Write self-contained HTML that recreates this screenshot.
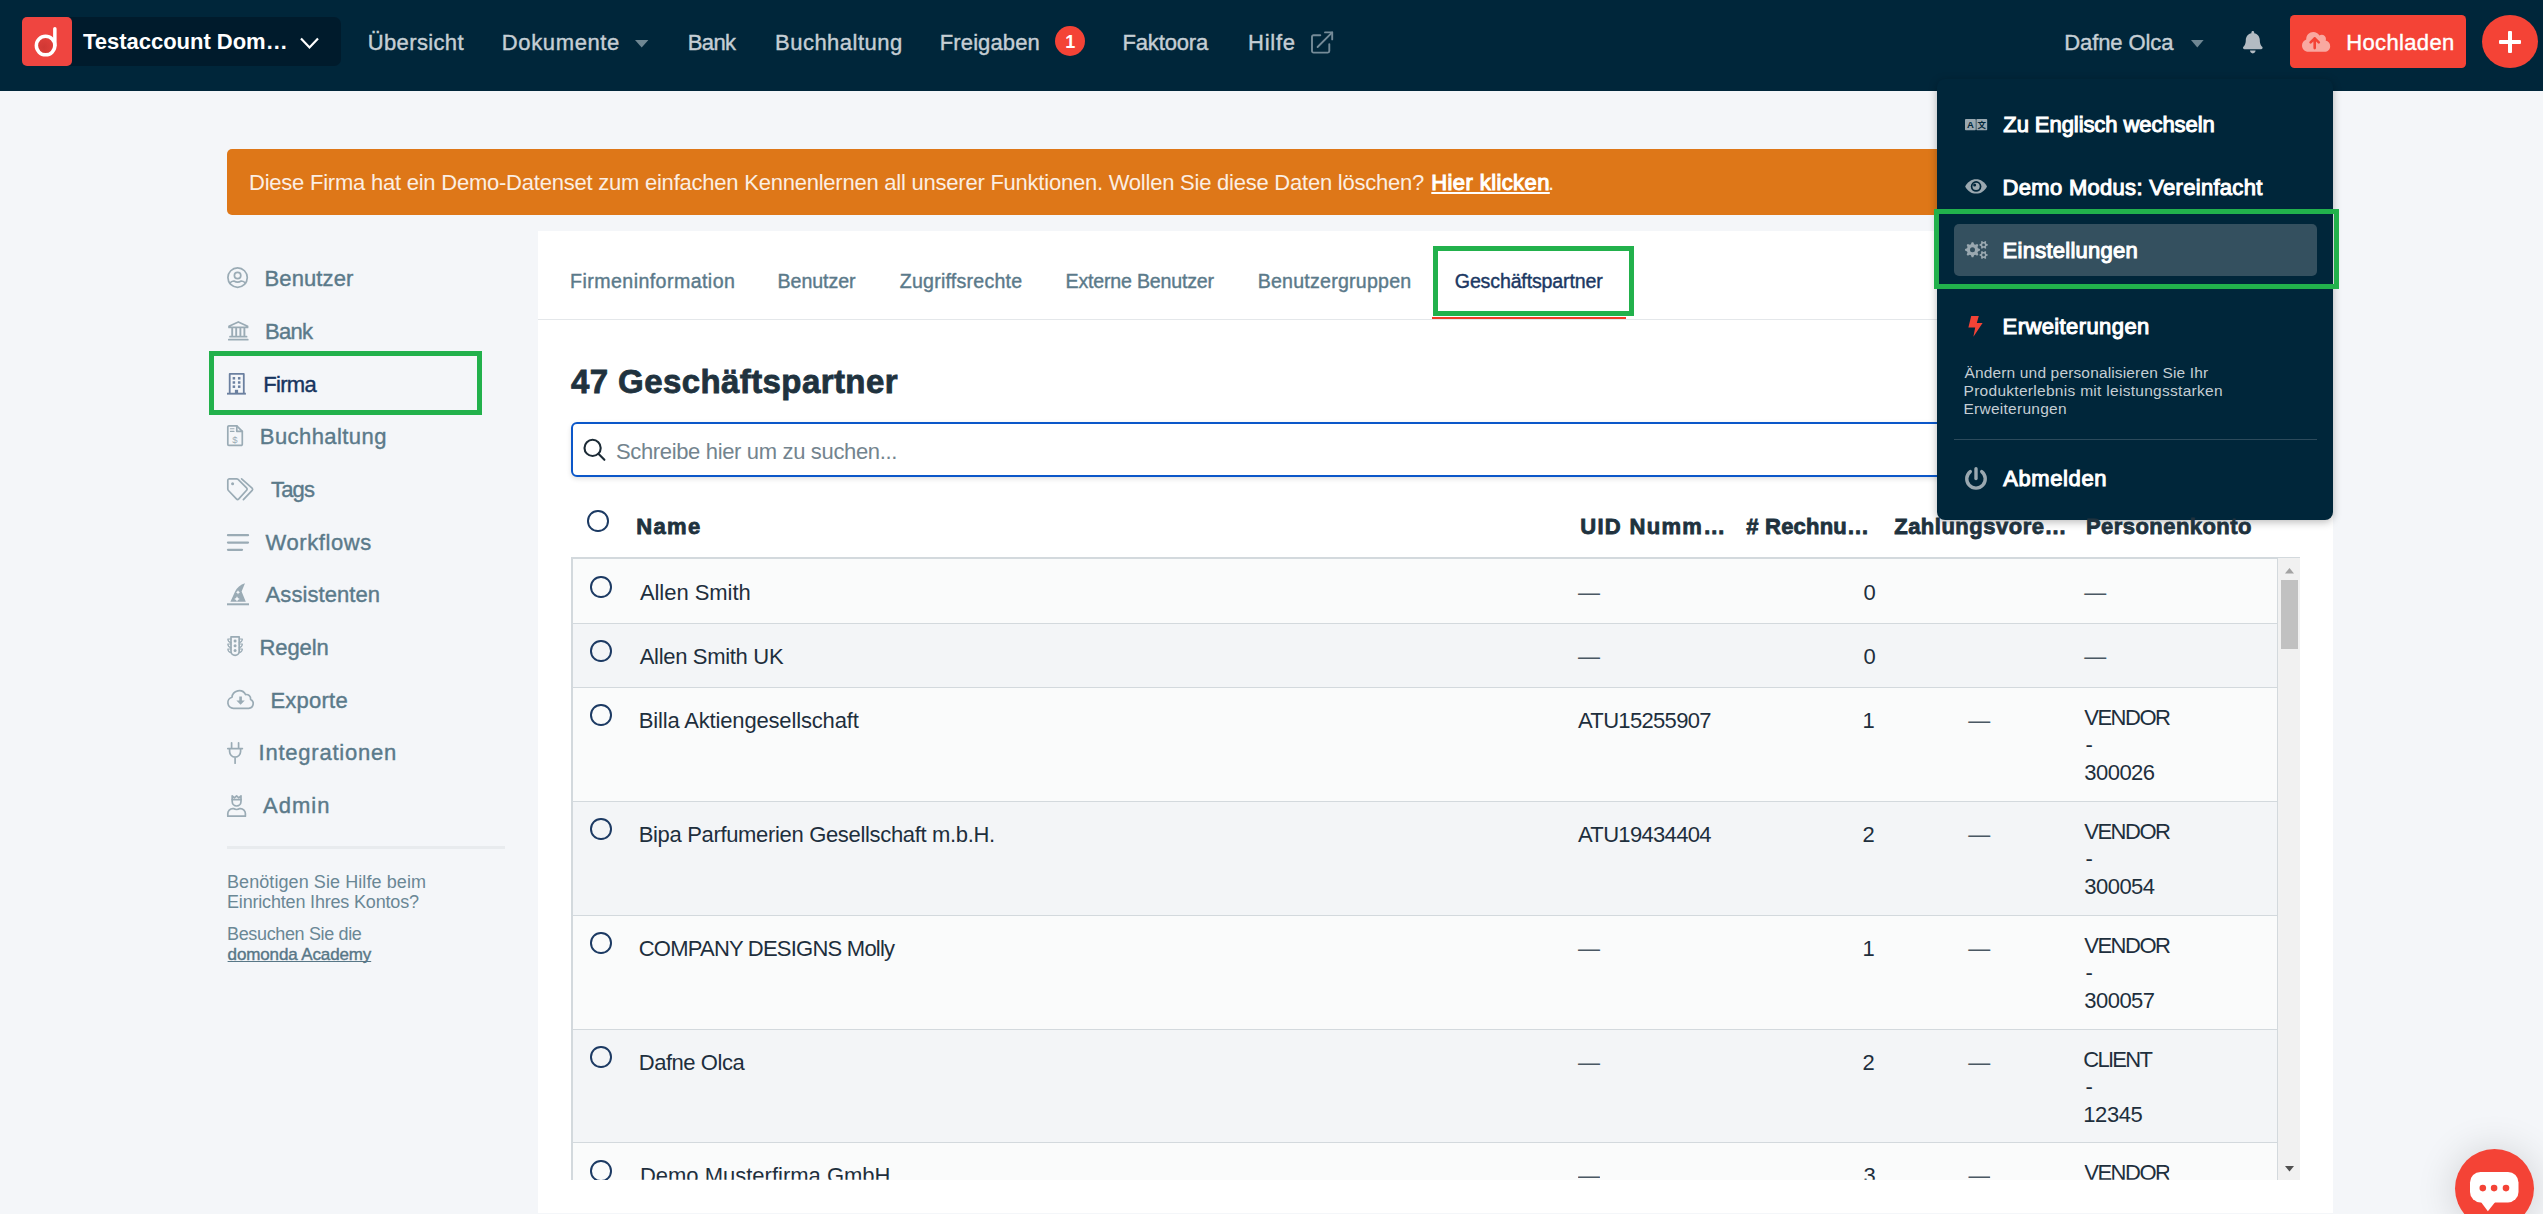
<!DOCTYPE html>
<html lang="de">
<head>
<meta charset="utf-8">
<title>domonda – Geschäftspartner</title>
<style>
html,body{margin:0;padding:0;}
body{width:2543px;height:1214px;overflow:hidden;position:relative;background:#f4f6f9;font-family:"Liberation Sans",sans-serif;}
.a{position:absolute;}
.t{position:absolute;white-space:nowrap;line-height:1;font-weight:400;}
.t.b{font-weight:700;}
.t.s{-webkit-text-stroke:0.4px currentColor;}
.t.m{-webkit-text-stroke:1.05px currentColor;}
.t.k{font-weight:700;-webkit-text-stroke:0.8px currentColor;}
svg{position:absolute;overflow:visible;}
.row{position:absolute;left:573px;width:1705px;border-bottom:1.5px solid #d3d9dd;box-sizing:border-box;}
.ro{background:#fafbfb;}
.re{background:#f3f5f7;}
.rad{position:absolute;width:21.5px;height:21.5px;border:2.1px solid #1c3a63;border-radius:50%;box-sizing:border-box;}
.green{position:absolute;border:5px solid #22b14c;box-sizing:border-box;}
</style>
</head>
<body>
<!-- NAVBAR -->
<div class="a" style="left:0;top:0;width:2543px;height:90.6px;background:#00263a;"></div>
<div class="a" style="left:22px;top:17px;width:319px;height:49px;background:#001b2c;border-radius:7px;"></div>
<div class="a" style="left:22px;top:17px;width:50px;height:49px;background:#ef4540;border-radius:5px;"></div>
<svg style="left:22px;top:17px" width="50" height="49" viewBox="0 0 50 49">
 <defs><radialGradient id="lg" cx="0.4" cy="0.6" r="0.75"><stop offset="0" stop-color="#d03834"/><stop offset="1" stop-color="#e5413c"/></radialGradient></defs>
 <circle cx="23.6" cy="28.6" r="9.25" fill="url(#lg)" stroke="#fff" stroke-width="3.5"/>
 <path d="M32.85 28.6 V11.7" stroke="#fff" stroke-width="3.5" stroke-linecap="round" fill="none"/>
</svg>
<svg style="left:300px;top:37px" width="20" height="13" viewBox="0 0 20 13"><path d="M1 1.5 L9.5 10.5 L18 1.5" fill="none" stroke="#fff" stroke-width="2.2"/></svg>
<!-- carets -->
<svg style="left:635.4px;top:39.5px" width="13.4" height="7.5" viewBox="0 0 13.4 7.5"><path d="M0 0H13.4L6.7 7.5Z" fill="#6f8793"/></svg>
<svg style="left:2191.3px;top:39.5px" width="12.6" height="7.5" viewBox="0 0 12.6 7.5"><path d="M0 0H12.6L6.3 7.5Z" fill="#6f8793"/></svg>
<!-- badge -->
<div class="a" style="left:1054.7px;top:26.2px;width:30px;height:30px;border-radius:50%;background:#f44336;"></div>
<!-- external link icon -->
<svg style="left:1311px;top:30.5px" width="23" height="23" viewBox="0 0 23 23" fill="none" stroke="#758b98" stroke-width="1.9" stroke-linecap="round" stroke-linejoin="round">
 <path d="M18.3 13.1 V20.1 a1.5 1.5 0 0 1 -1.5 1.5 H2.5 a1.5 1.5 0 0 1 -1.5 -1.5 V5.7 a1.5 1.5 0 0 1 1.5 -1.5 H9.3"/>
 <path d="M14 1.4 H21.2 V8.4"/><path d="M21.2 1.4 L6.6 16"/>
</svg>
<!-- bell -->
<svg style="left:2242.7px;top:30.7px" width="19.6" height="22.4" viewBox="0 0 448 512"><path fill="#b3bbc2" d="M224 512c35.32 0 63.97-28.65 63.97-64H160.03c0 35.35 28.65 64 63.97 64zm215.39-149.71c-19.32-20.76-55.47-51.99-55.47-154.29 0-77.7-54.48-139.9-127.94-155.16V32c0-17.67-14.32-32-31.98-32s-31.98 14.33-31.98 32v20.84C118.56 68.1 64.08 130.3 64.08 208c0 102.3-36.15 133.53-55.47 154.29-6 6.45-8.66 14.16-8.61 21.71.11 16.4 12.98 32 32.1 32h383.8c19.12 0 32-15.6 32.1-32 .05-7.55-2.61-15.27-8.61-21.71z"/></svg>
<!-- upload button -->
<div class="a" style="left:2290px;top:14.8px;width:175.8px;height:53.1px;border-radius:4.5px;background:#f44336;"></div>
<svg style="left:2301.8px;top:32.2px" width="28.2" height="19.8" viewBox="0 0 640 448"><path fill="#f9a8a0" d="M537.6 194.600c4.100-10.700 6.400-22.400 6.400-34.600 0-53-43-96-96-96-19.700 0-38.100 6-53.300 16.200C367 32.200 315.300 0 256 0 167.600 0 96 71.600 96 160c0 2.700.1 5.400.2 8.100C40.200 187.800 0 241.200 0 304c0 79.500 64.500 144 144 144h368c70.700 0 128-57.300 128-128 0-61.900-44-113.600-102.400-125.400z"/></svg>
<svg style="left:2301.8px;top:32.2px" width="28.2" height="19.8" viewBox="0 0 28.2 19.8" fill="none" stroke="#f44336" stroke-width="2.6" stroke-linecap="round" stroke-linejoin="round"><path d="M12.7 16.1V6.4M8.6 10.4L12.7 6.3L16.8 10.4"/></svg>
<!-- plus circle -->
<div class="a" style="left:2482px;top:14.8px;width:56px;height:53px;border-radius:50%;background:#f44336;"></div>
<div class="a" style="left:2499.3px;top:39.9px;width:21.7px;height:4.4px;background:#fff;border-radius:1px;"></div>
<div class="a" style="left:2507.9px;top:31.2px;width:4.4px;height:21.9px;background:#fff;border-radius:1px;"></div>

<!-- BANNER -->
<div class="a" style="left:227px;top:149px;width:2106px;height:65.8px;border-radius:5px;background:#de7718;"></div>

<!-- PANEL -->
<div class="a" style="left:538px;top:231px;width:1795px;height:982px;background:#fff;"></div>
<div class="a" style="left:538px;top:319px;width:1795px;height:1px;background:#e4e7ea;"></div>
<div class="a" style="left:1432px;top:317px;width:194px;height:2px;background:#f23b26;"></div>

<!-- SEARCH -->
<div class="a" style="left:570.6px;top:421.5px;width:1729.4px;height:55.8px;box-sizing:border-box;border:2.7px solid #0b57c9;border-radius:6px;background:#fff;box-shadow:0 2px 5px rgba(0,0,0,0.12);"></div>
<svg style="left:582.6px;top:439.1px" width="23" height="22" viewBox="0 0 23 22" fill="none" stroke="#1c2b36" stroke-width="2.1"><circle cx="9.6" cy="8.9" r="8.1"/><path d="M15.4 14.7 L21.4 20.8" stroke-linecap="round"/></svg>

<!-- TABLE -->
<div class="a" style="left:571px;top:556.6px;width:1729px;height:2.6px;background:#d3d9dd;"></div>
<div class="a" style="left:571px;top:558px;width:1729px;height:622px;overflow:hidden;">
  <div class="a" style="left:0;top:0;width:2px;height:622px;background:#d3d9dd;"></div>
  <div class="a" style="left:1706.3px;top:0;width:1.7px;height:622px;background:#d3d9dd;"></div>
  <div class="a" style="left:1707px;top:0;width:22px;height:622px;background:#f1f1f1;"></div>
  <div class="a" style="left:1710px;top:22px;width:17px;height:69px;background:#c1c1c1;"></div>
  <svg style="left:1714px;top:9.5px" width="9" height="5.5" viewBox="0 0 9 5.5"><path d="M0 5.5H9L4.5 0Z" fill="#a3a3a3"/></svg>
  <svg style="left:1714px;top:607.5px" width="9" height="5.5" viewBox="0 0 9 5.5"><path d="M0 0H9L4.5 5.5Z" fill="#505050"/></svg>
  <div class="row ro" style="left:2px;width:1704px;top:1px;height:64.5px;"></div>
  <div class="row re" style="left:2px;width:1704px;top:65.5px;height:64px;"></div>
  <div class="row ro" style="left:2px;width:1704px;top:129.5px;height:114px;"></div>
  <div class="row re" style="left:2px;width:1704px;top:243.5px;height:114px;"></div>
  <div class="row ro" style="left:2px;width:1704px;top:357.5px;height:114px;"></div>
  <div class="row re" style="left:2px;width:1704px;top:471.5px;height:113.5px;"></div>
  <div class="row ro" style="left:2px;width:1704px;top:585px;height:114px;"></div>
  <div class="rad" style="left:19.3px;top:602.3px;"></div>
</div>
<!-- radios -->
<div class="rad" style="left:587.2px;top:510.2px;"></div>
<div class="rad" style="left:590.3px;top:576.2px;"></div>
<div class="rad" style="left:590.3px;top:640.1px;"></div>
<div class="rad" style="left:590.3px;top:704.2px;"></div>
<div class="rad" style="left:590.3px;top:818.2px;"></div>
<div class="rad" style="left:590.3px;top:932.2px;"></div>
<div class="rad" style="left:590.3px;top:1046.3px;"></div>


<!-- SIDEBAR -->
<div class="a" style="left:227px;top:845.5px;width:278px;height:3.2px;background:#e8ebee;"></div>
<svg style="left:226.8px;top:267.3px" width="21.2" height="21.2" viewBox="0 0 21.2 21.2" fill="none" stroke="#9aabb5" stroke-width="1.7" stroke-linecap="round" stroke-linejoin="round"><circle cx="10.6" cy="10.6" r="9.7"/><circle cx="10.6" cy="8.5" r="3.2"/><path d="M2.7 16.3C3.9 14.7 5.6 13.9 7 14C8.2 14.7 9.4 15.1 10.6 15.1C11.8 15.1 13 14.7 14.2 14C15.6 13.9 17.3 14.7 18.5 16.3"/></svg>
<svg style="left:227.8px;top:321.2px" width="20.6" height="19.6" viewBox="0 0 20.6 19.6" fill="none" stroke="#9aabb5" stroke-width="1.7" stroke-linecap="round" stroke-linejoin="round"><path d="M1 5.3L10.3 0.9L19.6 5.3V6.4H1Z"/><path d="M4.2 7.4V14.6M8.2 7.4V14.6M12.4 7.4V14.6M16.4 7.4V14.6" stroke-width="1.9"/><path d="M2 15.7H18.6M0.8 18.7H19.8"/></svg>
<svg style="left:227.1px;top:373.3px" width="18.9" height="21.7" viewBox="0 0 18.9 21.7" fill="none" stroke="#6b80a0" stroke-width="1.8" stroke-linejoin="round"><path d="M2.7 20.6V0.9H16.8V20.6"/><path d="M0 20.7H18.9" stroke-width="1.9"/><g fill="#6b80a0" stroke="none"><rect x="5.65" y="4.05" width="2.5" height="2.5"/><rect x="5.65" y="8.25" width="2.5" height="2.5"/><rect x="5.65" y="12.45" width="2.5" height="2.5"/><rect x="10.95" y="4.05" width="2.5" height="2.5"/><rect x="10.95" y="8.25" width="2.5" height="2.5"/><rect x="10.95" y="12.45" width="2.5" height="2.5"/><rect x="7.9" y="16.8" width="3.2" height="4"/></g></svg>
<svg style="left:226.8px;top:425.3px" width="16.2" height="21.2" viewBox="0 0 16.2 21.2" fill="none" stroke="#9aabb5" stroke-width="1.7" stroke-linecap="round" stroke-linejoin="round"><path d="M1.9 0.8H9.8L15.3 6.3V19.2A1.2 1.2 0 0 1 14.1 20.4H1.9A1.2 1.2 0 0 1 0.8 19.2V1.9A1.2 1.2 0 0 1 1.9 0.8Z"/><path d="M9.8 0.8V6.3H15.3"/><path d="M3.4 3.8H7M3.4 6.4H7" stroke-width="1.1"/><text x="8" y="17.6" font-family="Liberation Sans, sans-serif" font-size="9.5" text-anchor="middle" fill="#9aabb5" stroke="none">$</text></svg>
<svg style="left:227.2px;top:477.7px" width="26.6" height="22.6" viewBox="0 0 26.6 22.6" fill="none" stroke="#9aabb5" stroke-width="1.7" stroke-linecap="round" stroke-linejoin="round"><path d="M0.8 2.4A1.6 1.6 0 0 1 2.4 0.8H9.6A2.2 2.2 0 0 1 11.1 1.4L19.6 9.9A1.7 1.7 0 0 1 19.6 12.3L11.8 20.9A1.7 1.7 0 0 1 9.4 20.9L1.4 12.5A2.2 2.2 0 0 1 0.8 11Z"/><path d="M14.6 0.9L25.1 10.1A1.7 1.7 0 0 1 25.2 12.4L16.4 21.7"/><circle cx="5.6" cy="5.8" r="1.5" fill="#9aabb5" stroke="none"/></svg>
<svg style="left:227px;top:533.6px" width="22" height="17" viewBox="0 0 22 17" fill="none" stroke="#9aabb5" stroke-width="1.7" stroke-linecap="round" stroke-linejoin="round"><path d="M1 1.2H21M1 8.6H21M1 15.8H15" stroke-width="2.3"/></svg>
<svg style="left:227px;top:583.2px" width="22" height="22.4" viewBox="0 0 22 22.4" ><path d="M0 21.3H22" stroke="#9aabb5" stroke-width="2"/><path d="M3.4 18.8L8.2 8.2C9.8 4.6 13.4 1.6 18 0.2L14.6 8.6L18.8 18.8Z" fill="#9aabb5"/><path d="M11 7.2l.7 1.4 1.4.7-1.4.7-.7 1.4-.7-1.4-1.4-.7 1.4-.7z M10 13.2l.9 1.9 1.9.9-1.9.9-.9 1.9-.9-1.9-1.9-.9 1.9-.9z" fill="#f4f6f9"/></svg>
<svg style="left:227px;top:636.2px" width="16.2" height="21.8" viewBox="0 0 16.2 21.8" fill="none" stroke="#9aabb5" stroke-width="1.7" stroke-linecap="round" stroke-linejoin="round"><path d="M4 0.8H12.2V15.2A4.1 4.1 0 0 1 4 15.2Z"/><path d="M4 3H0.8C0.9 5 2.2 6.3 4 6.6M4 8H0.8C0.9 10 2.2 11.3 4 11.6M4 13H0.8C0.9 15 2.2 16.3 4 16.6M12.2 3H15.4C15.3 5 14 6.3 12.2 6.6M12.2 8H15.4C15.3 10 14 11.3 12.2 11.6M12.2 13H15.4C15.3 15 14 16.3 12.2 16.6" stroke-width="1.2"/><g fill="#9aabb5" stroke="none"><circle cx="8.1" cy="5" r="1.5"/><circle cx="8.1" cy="9.8" r="1.5"/><circle cx="8.1" cy="14.6" r="1.5"/></g></svg>
<svg style="left:227px;top:690.4px" width="27.2" height="19.2" viewBox="0 0 27.2 19.2" fill="none" stroke="#9aabb5" stroke-width="1.7" stroke-linecap="round" stroke-linejoin="round"><path d="M6.4 18.3A5.6 5.6 0 0 1 5 7.3A7.2 7.2 0 0 1 18.6 4.6A4.3 4.3 0 0 1 23.6 9.4A4.7 4.7 0 0 1 21.8 18.3Z"/><path d="M12.3 6.4h2.6v4h2.9l-4.2 4.4-4.2-4.4h2.9z" fill="#9aabb5" stroke="none"/></svg>
<svg style="left:227px;top:742px" width="16.2" height="22" viewBox="0 0 16.2 22" fill="none" stroke="#9aabb5" stroke-width="1.7" stroke-linecap="round" stroke-linejoin="round"><path d="M4.6 0.8V6M11.6 0.8V6M0.8 6.6H15.4M2.6 6.6V9.6A5.5 5.5 0 0 0 13.6 9.6V6.6M8.1 15.2V21.2"/></svg>
<svg style="left:227px;top:795.2px" width="19.2" height="22" viewBox="0 0 19.2 22" fill="none" stroke="#9aabb5" stroke-width="1.7" stroke-linecap="round" stroke-linejoin="round"><path d="M5.2 0.8L7.4 2.8L9.6 0.8L11.8 2.8L14 0.8V6.6A4.4 4.4 0 0 1 5.2 6.6Z"/><path d="M5.2 4.6H14"/><path d="M0.8 21.2V18.6A5 5 0 0 1 5.8 13.6H6.3C7.3 14.2 8.4 14.5 9.6 14.5S11.9 14.2 12.9 13.6H13.4A5 5 0 0 1 18.4 18.6V21.2Z"/></svg>

<!-- DROPDOWN -->
<div class="a" style="left:1937px;top:79px;width:396px;height:441px;background:#00263a;border-radius:8px;box-shadow:0 2px 9px rgba(0,0,0,0.28);"></div>
<div class="a" style="left:1954px;top:224px;width:363px;height:52px;background:#34505f;border-radius:5px;"></div>
<div class="a" style="left:1954px;top:439px;width:363px;height:1.2px;background:#2c4a5b;"></div>
<svg style="left:1965px;top:118.7px" width="22.2" height="11.2" viewBox="0 0 22.2 11.2" ><rect x="0" y="0" width="10.8" height="11.2" rx="0.8" fill="#9aa8b0"/><rect x="11.4" y="0" width="10.8" height="11.2" rx="0.8" fill="#9aa8b0"/><text x="5.4" y="9.3" font-family="Liberation Sans, sans-serif" font-weight="700" font-size="9.5" text-anchor="middle" fill="#00263a">A</text><text x="16.8" y="9.2" font-family="Noto Sans CJK SC, sans-serif" font-weight="700" font-size="8.5" text-anchor="middle" fill="#00263a">文</text></svg>
<svg style="left:1965px;top:179.4px" width="22.2" height="14.8" viewBox="0 0 22.2 14.8" ><path d="M0.2 7.4C2.5 2.8 6.5 0.2 11.1 0.2S19.7 2.8 22 7.4C19.7 12 15.7 14.6 11.1 14.6S2.5 12 0.2 7.4Z" fill="#9aa8b0"/><circle cx="11.1" cy="7.4" r="5.3" fill="#00263a"/><circle cx="11.1" cy="7.4" r="3.6" fill="#9aa8b0"/><circle cx="9.6" cy="5.9" r="1.5" fill="#00263a"/></svg>
<svg style="left:1964.5px;top:241px" width="22.8" height="19" viewBox="0 0 22.8 19" ><path d="M14.95 7.98L14.95 9.62L12.97 10.39L12.49 11.55L13.35 13.49L12.19 14.65L10.25 13.79L9.09 14.27L8.32 16.25L6.68 16.25L5.91 14.27L4.75 13.79L2.81 14.65L1.65 13.49L2.51 11.55L2.03 10.39L0.05 9.62L0.05 7.98L2.03 7.21L2.51 6.05L1.65 4.11L2.81 2.95L4.75 3.81L5.91 3.33L6.68 1.35L8.32 1.35L9.09 3.33L10.25 3.81L12.19 2.95L13.35 4.11L12.49 6.05L12.97 7.21Z" fill="#9aa8b0"/><circle cx="7.5" cy="8.8" r="2.5" fill="#34505f"/><path d="M22.75 3.29L22.75 4.51L21.39 5.00L20.95 5.76L21.21 7.19L20.15 7.81L19.04 6.87L18.16 6.87L17.05 7.81L15.99 7.19L16.25 5.76L15.81 5.00L14.45 4.51L14.45 3.29L15.81 2.80L16.25 2.04L15.99 0.61L17.05 -0.01L18.16 0.93L19.04 0.93L20.15 -0.01L21.21 0.61L20.95 2.04L21.39 2.80Z" fill="#9aa8b0"/><circle cx="18.6" cy="3.9" r="1.4" fill="#34505f"/><path d="M22.75 13.39L22.75 14.61L21.39 15.10L20.95 15.86L21.21 17.29L20.15 17.91L19.04 16.97L18.16 16.97L17.05 17.91L15.99 17.29L16.25 15.86L15.81 15.10L14.45 14.61L14.45 13.39L15.81 12.90L16.25 12.14L15.99 10.71L17.05 10.09L18.16 11.03L19.04 11.03L20.15 10.09L21.21 10.71L20.95 12.14L21.39 12.90Z" fill="#9aa8b0"/><circle cx="18.6" cy="14" r="1.4" fill="#34505f"/></svg>
<svg style="left:1968px;top:316px" width="15" height="20.8" viewBox="0 0 15 20.8" ><path d="M3.2 0H10.8L8.8 7H14.6L5.4 20.8L7.2 11.4H0.4Z" fill="#f44336"/></svg>
<svg style="left:1965.1px;top:466.7px" width="22" height="22.4" viewBox="0 0 22 22.4" ><path d="M5.3 4.6A9.25 9.25 0 1 0 16.7 4.6" fill="none" stroke="#9aa8b0" stroke-width="3.4" stroke-linecap="round"/><path d="M11 1.7V11.6" stroke="#9aa8b0" stroke-width="3.4" stroke-linecap="round"/></svg>

<!-- GREEN HIGHLIGHTS -->
<div class="green" style="left:209px;top:351px;width:273px;height:64px;"></div>
<div class="green" style="left:1433px;top:246px;width:201px;height:70px;"></div>
<div class="green" style="left:1934px;top:209px;width:405px;height:80px;"></div>

<!-- CHAT -->
<div class="a" style="left:2455px;top:1149px;width:79px;height:79px;border-radius:50%;background:#f44336;box-shadow:0 2px 40px rgba(0,0,0,0.16);"></div>
<svg style="left:2469.7px;top:1171.8px" width="48.5" height="39.5" viewBox="0 0 48.5 39.5"><rect x="0" y="0" width="48.5" height="30.4" rx="10.5" fill="#fff"/><path d="M10.6 29.5H25.6L17.9 39.3Z" fill="#fff"/><circle cx="12.8" cy="16.1" r="3.3" fill="#f44336"/><circle cx="24.1" cy="16.1" r="3.3" fill="#f44336"/><circle cx="36" cy="16.1" r="3.3" fill="#f44336"/></svg>

<span class="t b" style="left:83.0px;top:31px;font-size:22px;color:#fff;letter-spacing:-0.02px;">Testaccount Dom…</span>
<span class="t s" style="left:367.8px;top:32px;font-size:22px;color:#c5ced4;letter-spacing:0.35px;">Übersicht</span>
<span class="t s" style="left:501.8px;top:32px;font-size:22px;color:#c5ced4;letter-spacing:0.63px;">Dokumente</span>
<span class="t s" style="left:687.7px;top:32px;font-size:22px;color:#c5ced4;letter-spacing:-0.58px;">Bank</span>
<span class="t s" style="left:775.0px;top:32px;font-size:22px;color:#c5ced4;letter-spacing:0.49px;">Buchhaltung</span>
<span class="t s" style="left:939.8px;top:32px;font-size:22px;color:#c5ced4;letter-spacing:0.11px;">Freigaben</span>
<span class="t s" style="left:1122.5px;top:32px;font-size:22px;color:#c5ced4;letter-spacing:-0.15px;">Faktoora</span>
<span class="t s" style="left:1248.0px;top:32px;font-size:22px;color:#c5ced4;letter-spacing:0.76px;">Hilfe</span>
<span class="t s" style="left:2064.3px;top:32px;font-size:22px;color:#c5ced4;letter-spacing:-0.11px;">Dafne Olca</span>
<span class="t b" style="left:1065.3px;top:33px;font-size:18px;color:#fff;">1</span>
<span class="t s" style="left:2346.2px;top:32px;font-size:22px;color:#fff;letter-spacing:0.36px;">Hochladen</span>
<span class="t" style="left:249.0px;top:172px;font-size:22px;color:#fbeee3;letter-spacing:-0.23px;">Diese Firma hat ein Demo-Datenset zum einfachen Kennenlernen all unserer Funktionen. Wollen Sie diese Daten löschen?</span>
<span class="t m" style="left:1431.3px;top:172px;font-size:22px;color:#fff;letter-spacing:0.40px;text-decoration:underline;text-decoration-thickness:1.7px;text-underline-offset:2px;">Hier klicken</span>
<span class="t" style="left:1548.0px;top:172px;font-size:22px;color:#fbeee3;">.</span>
<span class="t s" style="left:264.5px;top:268px;font-size:22px;color:#5b7a8a;letter-spacing:0.11px;">Benutzer</span>
<span class="t s" style="left:265.0px;top:321px;font-size:22px;color:#5b7a8a;letter-spacing:-0.71px;">Bank</span>
<span class="t s" style="left:263.3px;top:374px;font-size:22px;color:#17355f;letter-spacing:-0.72px;">Firma</span>
<span class="t s" style="left:259.8px;top:426px;font-size:22px;color:#5b7a8a;letter-spacing:0.43px;">Buchhaltung</span>
<span class="t s" style="left:271.0px;top:479px;font-size:22px;color:#5b7a8a;letter-spacing:-0.82px;">Tags</span>
<span class="t s" style="left:265.5px;top:532px;font-size:22px;color:#5b7a8a;letter-spacing:0.58px;">Workflows</span>
<span class="t s" style="left:265.6px;top:584px;font-size:22px;color:#5b7a8a;letter-spacing:0.06px;">Assistenten</span>
<span class="t s" style="left:259.5px;top:637px;font-size:22px;color:#5b7a8a;letter-spacing:-0.08px;">Regeln</span>
<span class="t s" style="left:270.4px;top:690px;font-size:22px;color:#5b7a8a;letter-spacing:0.25px;">Exporte</span>
<span class="t s" style="left:258.5px;top:742px;font-size:22px;color:#5b7a8a;letter-spacing:0.78px;">Integrationen</span>
<span class="t s" style="left:263.0px;top:795px;font-size:22px;color:#5b7a8a;letter-spacing:1.04px;">Admin</span>
<span class="t" style="left:227.0px;top:873px;font-size:18px;color:#6a8795;letter-spacing:0.08px;">Benötigen Sie Hilfe beim</span>
<span class="t" style="left:227.0px;top:893px;font-size:18px;color:#6a8795;letter-spacing:-0.18px;">Einrichten Ihres Kontos?</span>
<span class="t" style="left:227.0px;top:925px;font-size:18px;color:#6a8795;letter-spacing:-0.35px;">Besuchen Sie die</span>
<span class="t s" style="left:227.6px;top:946px;font-size:17px;color:#587787;letter-spacing:-0.13px;text-decoration:underline;text-decoration-thickness:1px;text-underline-offset:0.6px;text-decoration-skip-ink:none;">domonda Academy</span>
<span class="t s" style="left:570.1px;top:272px;font-size:19.6px;color:#5b7a8a;letter-spacing:0.43px;">Firmeninformation</span>
<span class="t s" style="left:777.6px;top:272px;font-size:19.6px;color:#5b7a8a;letter-spacing:-0.07px;">Benutzer</span>
<span class="t s" style="left:899.8px;top:272px;font-size:19.6px;color:#5b7a8a;letter-spacing:0.22px;">Zugriffsrechte</span>
<span class="t s" style="left:1065.6px;top:272px;font-size:19.6px;color:#5b7a8a;letter-spacing:-0.20px;">Externe Benutzer</span>
<span class="t s" style="left:1257.7px;top:272px;font-size:19.6px;color:#5b7a8a;letter-spacing:0.23px;">Benutzergruppen</span>
<span class="t s" style="left:1454.8px;top:272px;font-size:19.6px;color:#1b3863;letter-spacing:-0.16px;">Geschäftspartner</span>
<span class="t k" style="left:571.0px;top:365px;font-size:33px;color:#20323e;letter-spacing:0.41px;">47 Geschäftspartner</span>
<span class="t" style="left:615.9px;top:441px;font-size:22px;color:#73848e;letter-spacing:-0.34px;">Schreibe hier um zu suchen...</span>
<span class="t k" style="left:636.2px;top:516px;font-size:22px;color:#20323e;letter-spacing:1.37px;">Name</span>
<span class="t k" style="left:1580.2px;top:516px;font-size:22px;color:#20323e;letter-spacing:1.32px;">UID Numm…</span>
<span class="t k" style="left:1746.3px;top:516px;font-size:22px;color:#20323e;letter-spacing:0.20px;"># Rechnu…</span>
<span class="t k" style="left:1894.2px;top:516px;font-size:22px;color:#20323e;letter-spacing:0.50px;">Zahlungsvore…</span>
<span class="t k" style="left:2086.0px;top:516px;font-size:22px;color:#20323e;letter-spacing:0.44px;">Personenkonto</span>
<span class="t" style="left:639.9px;top:582px;font-size:22px;color:#1e2f3d;letter-spacing:-0.04px;">Allen Smith</span>
<span class="t" style="left:639.7px;top:646px;font-size:22px;color:#1e2f3d;letter-spacing:-0.31px;">Allen Smith UK</span>
<span class="t" style="left:638.7px;top:710px;font-size:22px;color:#1e2f3d;letter-spacing:-0.16px;">Billa Aktiengesellschaft</span>
<span class="t" style="left:638.7px;top:824px;font-size:22px;color:#1e2f3d;letter-spacing:-0.33px;">Bipa Parfumerien Gesellschaft m.b.H.</span>
<span class="t" style="left:638.7px;top:938px;font-size:22px;color:#1e2f3d;letter-spacing:-0.77px;">COMPANY DESIGNS Molly</span>
<span class="t" style="left:638.7px;top:1052px;font-size:22px;color:#1e2f3d;letter-spacing:-0.45px;">Dafne Olca</span>
<span class="t" style="left:1863.6px;top:582px;font-size:22px;color:#1e2f3d;">0</span>
<span class="t" style="left:1863.6px;top:646px;font-size:22px;color:#1e2f3d;">0</span>
<span class="t" style="left:1862.6px;top:710px;font-size:22px;color:#1e2f3d;">1</span>
<span class="t" style="left:1862.6px;top:824px;font-size:22px;color:#1e2f3d;">2</span>
<span class="t" style="left:1862.6px;top:938px;font-size:22px;color:#1e2f3d;">1</span>
<span class="t" style="left:1862.6px;top:1052px;font-size:22px;color:#1e2f3d;">2</span>
<span class="t" style="left:1578.0px;top:710px;font-size:22px;color:#1e2f3d;letter-spacing:-0.67px;">ATU15255907</span>
<span class="t" style="left:1578.0px;top:824px;font-size:22px;color:#1e2f3d;letter-spacing:-0.67px;">ATU19434404</span>
<span class="t" style="left:2084.3px;top:707px;font-size:22px;color:#1e2f3d;letter-spacing:-1.51px;">VENDOR</span>
<span class="t" style="left:2085.5px;top:734px;font-size:22px;color:#1e2f3d;">-</span>
<span class="t" style="left:2084.3px;top:762px;font-size:22px;color:#1e2f3d;letter-spacing:-0.54px;">300026</span>
<span class="t" style="left:2084.3px;top:821px;font-size:22px;color:#1e2f3d;letter-spacing:-1.51px;">VENDOR</span>
<span class="t" style="left:2085.5px;top:848px;font-size:22px;color:#1e2f3d;">-</span>
<span class="t" style="left:2084.3px;top:876px;font-size:22px;color:#1e2f3d;letter-spacing:-0.54px;">300054</span>
<span class="t" style="left:2084.3px;top:935px;font-size:22px;color:#1e2f3d;letter-spacing:-1.51px;">VENDOR</span>
<span class="t" style="left:2085.5px;top:962px;font-size:22px;color:#1e2f3d;">-</span>
<span class="t" style="left:2084.3px;top:990px;font-size:22px;color:#1e2f3d;letter-spacing:-0.54px;">300057</span>
<span class="t" style="left:2083.3px;top:1049px;font-size:22px;color:#1e2f3d;letter-spacing:-1.72px;">CLIENT</span>
<span class="t" style="left:2085.5px;top:1076px;font-size:22px;color:#1e2f3d;">-</span>
<span class="t" style="left:2083.3px;top:1104px;font-size:22px;color:#1e2f3d;letter-spacing:-0.44px;">12345</span>
<span class="t" style="left:639.9px;top:1165px;font-size:22px;color:#1e2f3d;clip-path:inset(0 0 7.3px 0);">Demo Musterfirma GmbH</span>
<span class="t" style="left:1863.6px;top:1165px;font-size:22px;color:#1e2f3d;clip-path:inset(0 0 7.3px 0);">3</span>
<span class="t" style="left:2084.3px;top:1162px;font-size:22px;color:#1e2f3d;letter-spacing:-1.51px;clip-path:inset(0 0 4.3px 0);">VENDOR</span>
<span class="t" style="left:1578.0px;top:1165px;font-size:22px;color:#4a5863;clip-path:inset(0 0 7.3px 0);">—</span>
<span class="t" style="left:1968.3px;top:1165px;font-size:22px;color:#4a5863;clip-path:inset(0 0 7.3px 0);">—</span>
<span class="t" style="left:1578.0px;top:582px;font-size:22px;color:#4a5863;">—</span>
<span class="t" style="left:2084.3px;top:582px;font-size:22px;color:#4a5863;">—</span>
<span class="t" style="left:1578.0px;top:646px;font-size:22px;color:#4a5863;">—</span>
<span class="t" style="left:2084.3px;top:646px;font-size:22px;color:#4a5863;">—</span>
<span class="t" style="left:1578.0px;top:938px;font-size:22px;color:#4a5863;">—</span>
<span class="t" style="left:1578.0px;top:1052px;font-size:22px;color:#4a5863;">—</span>
<span class="t" style="left:1968.3px;top:710px;font-size:22px;color:#4a5863;">—</span>
<span class="t" style="left:1968.3px;top:824px;font-size:22px;color:#4a5863;">—</span>
<span class="t" style="left:1968.3px;top:938px;font-size:22px;color:#4a5863;">—</span>
<span class="t" style="left:1968.3px;top:1052px;font-size:22px;color:#4a5863;">—</span>
<span class="t m" style="left:2003.3px;top:114px;font-size:22px;color:#fff;letter-spacing:-0.07px;">Zu Englisch wechseln</span>
<span class="t m" style="left:2002.6px;top:177px;font-size:22px;color:#fff;letter-spacing:0.30px;">Demo Modus: Vereinfacht</span>
<span class="t m" style="left:2002.6px;top:240px;font-size:22px;color:#fff;letter-spacing:0.25px;">Einstellungen</span>
<span class="t m" style="left:2002.6px;top:316px;font-size:22px;color:#fff;letter-spacing:0.40px;">Erweiterungen</span>
<span class="t m" style="left:2003.2px;top:468px;font-size:22px;color:#fff;letter-spacing:0.60px;">Abmelden</span>
<span class="t" style="left:1964.5px;top:365px;font-size:15.5px;color:#c5ced4;letter-spacing:0.15px;">Ändern und personalisieren Sie Ihr</span>
<span class="t" style="left:1963.5px;top:383px;font-size:15.5px;color:#c5ced4;letter-spacing:0.29px;">Produkterlebnis mit leistungsstarken</span>
<span class="t" style="left:1963.5px;top:401px;font-size:15.5px;color:#c5ced4;letter-spacing:0.26px;">Erweiterungen</span>
</body>
</html>
